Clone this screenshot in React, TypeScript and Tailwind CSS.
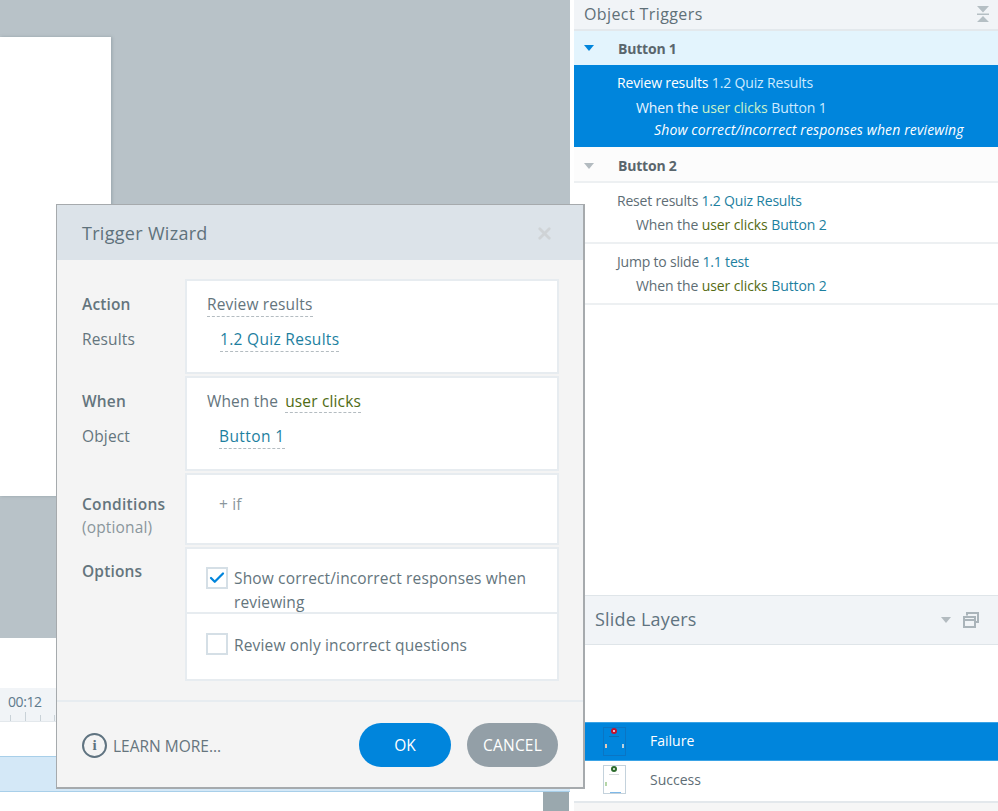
import { Check, X } from "lucide-react";

const font = { fontFamily: '"Open Sans", "Noto Sans", sans-serif' };

function Dashed({ className, children }: { className: string; children: React.ReactNode }) {
  return <span className={`border-b border-dashed border-[#b4bcc1] ${className}`}>{children}</span>;
}

function LayerThumb({ ok }: { ok: boolean }) {
  return (
    <div className={`relative w-[23px] h-[29px] border ${ok ? "bg-white border-[#c4d2dc]" : "bg-[#0085dc] border-[#0a75c4]"}`}>
      <div className={`absolute left-[7px] top-[0px] w-[6px] h-[6px] rounded-full flex items-center justify-center ${ok ? "bg-[#2c6b2c]" : "bg-[#c4122f]"}`}>
        <div className="w-[2px] h-[2px] bg-white/70" />
      </div>
      <div className={`absolute left-[5px] top-[8px] w-[10px] h-[1px] ${ok ? "bg-[#d5d9dc]" : "bg-[#0a6fb5]"}`} />
      <div className={`absolute left-[1px] top-[16px] w-[2px] h-[4px] ${ok ? "bg-[#b5d6a8]" : "bg-[#e4c9b5]"}`} />
      {!ok && <div className="absolute right-[1px] top-[16px] w-[2px] h-[4px] bg-[#b9d2e0]" />}
      {ok && <div className="absolute left-[6px] bottom-0 w-[11px] h-[1px] bg-[#7db8e8]" />}
    </div>
  );
}

function TriggerRow({ first, second }: { first: React.ReactNode; second: React.ReactNode }) {
  return (
    <div className="h-[61px] border-b-2 border-[#edf0f2] pl-[43px] pt-[6px] text-[14px] leading-[24px] text-[#5e6d75]">
      <div className="tracking-[-0.2px]">{first}</div>
      <div className="pl-[19px] tracking-[-0.1px]">{second}</div>
    </div>
  );
}

const ticks = [
  { x: "left-[10px]", h: "h-[6px]" },
  { x: "left-[25px]", h: "h-[9px]" },
  { x: "left-[40px]", h: "h-[6px]" },
  { x: "left-[54px]", h: "h-[6px]" },
];

function Timeline() {
  return (
    <div className="flex-1 flex flex-col bg-white">
      <div className="h-[50px]" />
      <div className="h-[34px] bg-[#f1f4f7] border-b border-[#e3e8ec] relative">
        <span className="absolute left-[8px] top-[3px] text-[14px] text-[#5f7a8c] tracking-[-0.4px]">00:12</span>
        {ticks.map((t) => (
          <div key={t.x} className={`absolute bottom-0 w-[1px] bg-[#c9d2d8] ${t.x} ${t.h}`} />
        ))}
      </div>
      <div className="h-[34px]" />
      <div className="h-[36px] bg-[#d4e8f7] border-y border-[#a8cfe9]" />
      <div className="flex-1 flex justify-end">
        <div className="w-[26px] mr-[1px] bg-[#9aa8ae]" />
      </div>
    </div>
  );
}

export default function App() {
  return (
    <div style={font} className="relative flex w-[998px] h-[811px] overflow-hidden bg-white">
      {/* left: stage and timeline */}
      <div className="w-[570px] flex flex-col">
        <div className="h-[638px] bg-[#b8c2c8] pt-[37px]">
          <div className="w-[111px] h-[459px] bg-white shadow-[1px_0_3px_rgba(90,105,115,0.35)]" />
        </div>
        <Timeline />
      </div>

      {/* right: panels */}
      <div className="flex-1 pl-[4px] flex flex-col">
        <div className="h-[31px] bg-[#f1f4f7] border-b-2 border-[#e3e8ec] flex items-center justify-between pl-[10px] pr-[9px]">
          <span className="text-[16px] font-medium text-[#5f7078] tracking-[0.4px] -mt-[2px]">Object Triggers</span>
          <svg width="12" height="16" viewBox="0 0 12 16" className="text-[#b5bfc4] -mt-[2px]">
            <path d="M0 0h12L6 6.5zM0 7.5h12V9H0zM6 10l6 6H0z" fill="currentColor" />
          </svg>
        </div>
        <div className="h-[34px] bg-[#e3f4fd] flex items-center pl-[10px]">
          <span className="w-0 h-0 border-x-[5px] border-x-transparent border-t-[6px] border-t-[#0085dc]" />
          <span className="ml-[24px] text-[14px] font-bold text-[#5a666d] tracking-[-0.2px]">Button 1</span>
        </div>
        <div className="h-[82px] bg-[#0085dc] pl-[43px] pt-[6px] text-[14px] leading-[24px] text-white">
          <div className="tracking-[-0.15px]">
            Review results <span className="text-[#cdeaff]">1.2 Quiz Results</span>
          </div>
          <div className="pl-[19px] pt-[1px] text-[#e8f5ff] tracking-[-0.1px]">
            When the <span className="text-[#c9f2c9]">user clicks</span> <span className="text-[#cdeaff]">Button 1</span>
          </div>
          <div className="pl-[37px] leading-[20px] italic tracking-[0.13px]">Show correct/incorrect responses when reviewing</div>
        </div>
        <div className="h-[36px] bg-[#fcfcfc] border-b-2 border-[#edf0f2] flex items-center pl-[10px] pt-[3px]">
          <span className="w-0 h-0 border-x-[5px] border-x-transparent border-t-[6px] border-t-[#b3bbc0]" />
          <span className="ml-[24px] text-[14px] font-bold text-[#5a666d] tracking-[-0.2px]">Button 2</span>
        </div>
        <TriggerRow
          first={<>Reset results <span className="text-[#1d7f9f]">1.2 Quiz Results</span></>}
          second={<>When the <span className="text-[#566b12]">user clicks</span> <span className="text-[#1d7f9f]">Button 2</span></>}
        />
        <TriggerRow
          first={<>Jump to slide <span className="text-[#1d7f9f]">1.1 test</span></>}
          second={<>When the <span className="text-[#566b12]">user clicks</span> <span className="text-[#1d7f9f]">Button 2</span></>}
        />
        <div className="flex-1" />
        <div className="h-[50px] bg-[#f1f4f7] border-y border-[#dfe5e9] flex items-center pl-[21px] pr-[19px]">
          <span className="text-[18px] text-[#5f7380] tracking-[0.2px] -mt-[2px]">Slide Layers</span>
          <span className="ml-auto w-0 h-0 border-x-[5px] border-x-transparent border-t-[6px] border-t-[#b3bbc0]" />
          <svg width="16" height="16" viewBox="0 0 16 16" fill="none" className="ml-[12px] text-[#aab4ba]">
            <path d="M4 3.5V1h11v9h-3" stroke="currentColor" strokeWidth="2" />
            <path d="M1 5h11v10H1zM1 8h11" stroke="currentColor" strokeWidth="2" />
          </svg>
        </div>
        <div className="h-[77px]" />
        <div className="h-[39px] bg-[#0085dc] border-y border-[#3aa3e6] flex items-center pl-[29px] text-[14px] text-white">
          <LayerThumb ok={false} />
          <span className="ml-[24px] -mt-[2px]">Failure</span>
        </div>
        <div className="h-[42px] border-b-2 border-[#e3e8ec] flex items-center pl-[29px] pb-[3px] text-[14px] text-[#5e6d75]">
          <LayerThumb ok />
          <span className="ml-[24px]">Success</span>
        </div>
        <div className="h-[8px] bg-[#f6f6f6]" />
      </div>

      {/* Trigger Wizard dialog */}
      <div className="absolute left-[56px] top-[204px] w-[529px] h-[585px] border border-[#a6aaad] border-b-2 border-r-2 bg-[#f4f4f4] flex flex-col">
        <div className="h-[55px] bg-[#dce3e9] flex items-center justify-between pl-[25px] pr-[29px] pt-[1px] shrink-0">
          <span className="text-[18px] text-[#5f727c] tracking-[0.3px]">Trigger Wizard</span>
          <X size={19} strokeWidth={3.5} className="text-[#cfd3d6]" />
        </div>
        <div className="flex-1 flex flex-col gap-[2px] pt-[19px] pl-[128px] pr-[24px] text-[15.5px] tracking-[0.15px] text-[#64757d] relative">
          <div className="h-[95px] bg-white border-2 border-[#e7ecf0] pl-[20px] pt-[13px] relative">
            <div className="h-[20px] leading-[20px]"><Dashed className="inline-block h-[23px]">Review results</Dashed></div>
            <div className="mt-[15px] ml-[13px] leading-[20px] h-[20px]"><Dashed className="inline-block h-[23px] text-[#1d7f9f] tracking-[0.3px]">1.2 Quiz Results</Dashed></div>
            <div className="absolute -left-[105px] top-[13px] leading-[20px] font-semibold w-[100px]">Action</div>
            <div className="absolute -left-[105px] top-[48px] leading-[20px] w-[100px]">Results</div>
          </div>
          <div className="h-[95px] bg-white border-2 border-[#e7ecf0] pl-[20px] pt-[13px] relative">
            <div className="h-[20px] leading-[20px]">
              When the <Dashed className="inline-block h-[22px] ml-[3px] text-[#4f6b14]">user clicks</Dashed>
            </div>
            <div className="mt-[15px] ml-[12px] leading-[20px] h-[20px]"><Dashed className="inline-block h-[23px] text-[#1d7f9f] tracking-[0.4px]">Button 1</Dashed></div>
            <div className="absolute -left-[105px] top-[13px] leading-[20px] font-semibold w-[100px]">When</div>
            <div className="absolute -left-[105px] top-[48px] leading-[20px] w-[100px]">Object</div>
          </div>
          <div className="h-[72px] bg-white border-2 border-[#e7ecf0] pl-[32px] pt-[19px] leading-[20px] text-[#8a969c] relative">
            + if
            <div className="absolute -left-[105px] top-[19px] leading-[20px] font-semibold w-[100px] tracking-[0.3px] text-[#64757d]">Conditions</div>
            <div className="absolute -left-[105px] top-[42px] leading-[20px] w-[100px] text-[#8a969c]">(optional)</div>
          </div>
          <div className="h-[134px] bg-white border-2 border-[#e7ecf0] relative flex flex-col">
            <div className="h-[65px] border-b-2 border-[#e7ecf0] flex pl-[19px] pt-[18px] overflow-hidden">
              <div className="w-[22px] h-[22px] border-2 border-[#d5dfe6] flex items-center justify-center shrink-0">
                <Check size={18} strokeWidth={3} className="text-[#0085dc]" />
              </div>
              <div className="ml-[6px] leading-[24px] -mt-[1px] w-[320px]">Show correct/incorrect responses when reviewing</div>
            </div>
            <div className="flex pl-[19px] pt-[19px]">
              <div className="w-[22px] h-[22px] border-2 border-[#d5dfe6] shrink-0" />
              <div className="ml-[6px] leading-[23px] mt-[1px]">Review only incorrect questions</div>
            </div>
            <div className="absolute -left-[105px] top-[12px] leading-[20px] font-semibold w-[100px]">Options</div>
          </div>
        </div>
        <div className="h-[87px] shrink-0 border-t-2 border-[#e7ecf0] flex items-center pl-[25px] pr-[25px] pt-[1px]">
          <span className="w-[25px] h-[25px] rounded-full border-2 border-[#5f7380] flex items-center justify-center text-[15px] font-bold text-[#5f7380]" style={{ fontFamily: '"Liberation Serif", serif' }}>
            i
          </span>
          <span className="ml-[6px] mt-[4px] text-[15.5px] text-[#66757d]">LEARN MORE...</span>
          <button className="ml-auto w-[92px] h-[44px] pt-[1px] rounded-full bg-[#0085dc] text-white text-[15.5px]">OK</button>
          <button className="ml-[16px] w-[91px] h-[44px] pt-[1px] rounded-full bg-[#939fa7] text-white text-[15.5px] tracking-[0.2px]">CANCEL</button>
        </div>
      </div>
    </div>
  );
}
